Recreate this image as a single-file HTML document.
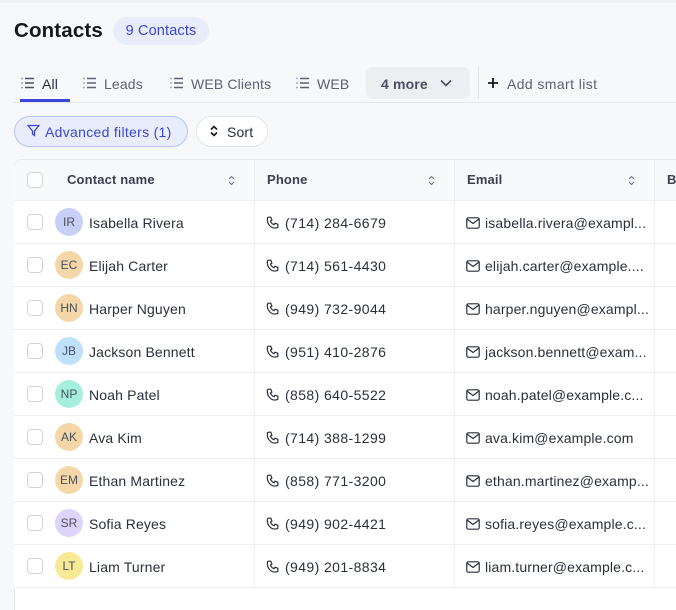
<!DOCTYPE html><html><head><style>
*{box-sizing:border-box;margin:0;padding:0}
html,body{width:676px;height:610px;overflow:hidden}
body{background:#f7f8fa;font-family:"Liberation Sans",sans-serif;color:#1f2330;position:relative;letter-spacing:0.15px}
.a{position:absolute}
.t{font-size:14px;color:#5b6272;white-space:nowrap}
.row{position:absolute;left:14px;width:662px;height:43px;border-bottom:1px solid #eceef2;background:#fff;overflow:hidden}
.cb{position:absolute;left:13px;top:13px;width:16px;height:16px;border:1px solid #cfd3db;border-radius:4px;background:#fff}
.av{position:absolute;left:41px;top:7px;width:28px;height:28px;border-radius:50%;font-size:12px;color:#4a5060;text-align:center;line-height:28px;letter-spacing:0}
.nm{position:absolute;left:75px;top:14px;font-size:14px;color:#2a2f3c}
.ph{position:absolute;top:14px;font-size:14px;color:#2a2f3c}
.em{position:absolute;top:14px;font-size:14px;color:#2a2f3c;white-space:nowrap}
</style></head><body>
<div class="a" style="left:0;top:0;width:676px;height:3px;background:#eef0f3"></div>
<div class="a" style="left:14px;top:19px;font-size:20.5px;font-weight:bold;color:#15171c">Contacts</div>
<div class="a" style="left:113px;top:17px;width:96px;height:28px;border-radius:14px;background:#e9edfb;color:#3b46d6;font-size:14.5px;text-align:center;line-height:29px">9 Contacts</div>

<svg class="a" style="left:21px;top:77px" width="14" height="12" viewBox="0 0 14 12" fill="none" stroke="#4a5060" stroke-width="1.4"><path d="M4 1.5h9M4 6h9M4 10.5h9M0.5 1.5h1M0.5 6h1M0.5 10.5h1"/></svg>
<div class="a t" style="left:42px;top:76px;color:#2a2f3c">All</div>
<div class="a" style="left:20px;top:99px;width:50px;height:3px;background:#3b46d6"></div>
<svg class="a" style="left:83px;top:77px" width="14" height="12" viewBox="0 0 14 12" fill="none" stroke="#5b6272" stroke-width="1.4"><path d="M4 1.5h9M4 6h9M4 10.5h9M0.5 1.5h1M0.5 6h1M0.5 10.5h1"/></svg>
<div class="a t" style="left:104px;top:76px">Leads</div>
<svg class="a" style="left:170px;top:77px" width="14" height="12" viewBox="0 0 14 12" fill="none" stroke="#5b6272" stroke-width="1.4"><path d="M4 1.5h9M4 6h9M4 10.5h9M0.5 1.5h1M0.5 6h1M0.5 10.5h1"/></svg>
<div class="a t" style="left:191px;top:76px">WEB Clients</div>
<svg class="a" style="left:296px;top:77px" width="14" height="12" viewBox="0 0 14 12" fill="none" stroke="#5b6272" stroke-width="1.4"><path d="M4 1.5h9M4 6h9M4 10.5h9M0.5 1.5h1M0.5 6h1M0.5 10.5h1"/></svg>
<div class="a t" style="left:317px;top:76px">WEB</div>
<div class="a" style="left:366px;top:67px;width:104px;height:32px;border-radius:7px;background:#eceef2"></div>
<div class="a t" style="left:381px;top:76px;font-weight:bold;color:#4a5060">4 more</div>
<svg class="a" style="left:440px;top:79px" width="12" height="8" viewBox="0 0 12 8" fill="none" stroke="#4a5060" stroke-width="1.6"><path d="M1 1.5l5 5 5-5"/></svg>
<div class="a" style="left:478px;top:67px;width:1px;height:32px;background:#e2e4e9"></div>
<svg class="a" style="left:487px;top:77px" width="12" height="12" viewBox="0 0 12 12" stroke="#15171c" stroke-width="1.8"><path d="M6 1v10M1 6h10"/></svg>
<div class="a t" style="left:507px;top:76px;letter-spacing:0.4px">Add smart list</div>
<div class="a" style="left:14px;top:102px;width:662px;height:1px;background:#e4e6ea"></div>

<div class="a" style="left:14px;top:116px;width:174px;height:31px;border-radius:16px;background:#e9edfb;border:1px solid #b9c3f5"></div>
<svg class="a" style="left:27px;top:124px" width="13" height="13" viewBox="0 0 13 13" fill="none" stroke="#3b46d6" stroke-width="1.3"><path d="M1 1.5h11L7.5 7v4.5L5.5 10V7z"/></svg>
<div class="a" style="left:45px;top:124px;font-size:14px;color:#3b46d6;letter-spacing:0.3px">Advanced filters (1)</div>
<div class="a" style="left:196px;top:116px;width:72px;height:31px;border-radius:16px;background:#fff;border:1px solid #e2e4e9"></div>
<svg class="a" style="left:210px;top:125px" width="8" height="12" viewBox="0 0 8 12" fill="none" stroke="#15171c" stroke-width="1.6"><path d="M1 4.5l3-3 3 3M1 7.5l3 3 3-3"/></svg>
<div class="a" style="left:227px;top:124px;font-size:14px;color:#2a2f3c">Sort</div>

<div class="a" style="left:14px;top:159px;width:662px;height:451px;background:#fff;border-top:1px solid #e6e8ec;border-left:1px solid #e6e8ec;border-radius:8px 0 0 0"></div>
<div class="row" style="top:160px;height:41px;background:#f8f9fb;border-radius:8px 0 0 0">
<div class="cb" style="top:12px"></div>
<div class="a" style="left:53px;top:12px;font-size:13px;font-weight:bold;color:#3a4050">Contact name</div>
<div class="a" style="left:253px;top:12px;font-size:13px;font-weight:bold;color:#3a4050">Phone</div>
<div class="a" style="left:453px;top:12px;font-size:13px;font-weight:bold;color:#3a4050">Email</div>
<div class="a" style="left:653px;top:12px;font-size:13px;font-weight:bold;color:#3a4050">B</div>
<svg class="a" style="left:214px;top:15px" width="7" height="11" viewBox="0 0 7 11" fill="none" stroke="#6b7280" stroke-width="1"><path d="M1 4l2.5-2.5L6 4M1 7l2.5 2.5L6 7"/></svg>
<svg class="a" style="left:414px;top:15px" width="7" height="11" viewBox="0 0 7 11" fill="none" stroke="#6b7280" stroke-width="1"><path d="M1 4l2.5-2.5L6 4M1 7l2.5 2.5L6 7"/></svg>
<svg class="a" style="left:614px;top:15px" width="7" height="11" viewBox="0 0 7 11" fill="none" stroke="#6b7280" stroke-width="1"><path d="M1 4l2.5-2.5L6 4M1 7l2.5 2.5L6 7"/></svg>
</div>
<div class="a" style="left:254px;top:160px;width:1px;height:428px;background:#eceef2;z-index:5"></div>
<div class="a" style="left:454px;top:160px;width:1px;height:428px;background:#eceef2;z-index:5"></div>
<div class="a" style="left:654px;top:160px;width:1px;height:428px;background:#eceef2;z-index:5"></div>
<div class="a" style="left:14px;top:200px;width:662px;height:1px;background:#eceef2;z-index:5"></div>

<div id="rows"></div>
<script>
var d=[["IR","Isabella Rivera","(714) 284-6679","isabella.rivera@exampl...","#c8d0f7"],
["EC","Elijah Carter","(714) 561-4430","elijah.carter@example....","#f3d7a8"],
["HN","Harper Nguyen","(949) 732-9044","harper.nguyen@exampl...","#f3d7a8"],
["JB","Jackson Bennett","(951) 410-2876","jackson.bennett@exam...","#bfe0fb"],
["NP","Noah Patel","(858) 640-5522","noah.patel@example.c...","#a5f0dc"],
["AK","Ava Kim","(714) 388-1299","ava.kim@example.com","#f3d7a8"],
["EM","Ethan Martinez","(858) 771-3200","ethan.martinez@examp...","#f3d7a8"],
["SR","Sofia Reyes","(949) 902-4421","sofia.reyes@example.c...","#ddd3fb"],
["LT","Liam Turner","(949) 201-8834","liam.turner@example.c...","#f8ea94"]];
var ph='<svg class="a" style="left:252px;top:15px" width="14" height="14" viewBox="0 0 14 14" fill="none" stroke="#2a2f3c" stroke-width="1.2"><path d="M2.5 1.2h2.3l1.1 2.9-1.5 1c.7 1.6 2 2.9 3.6 3.6l1-1.5 2.9 1.1v2.3c0 .6-.5 1.1-1.1 1.1C5.7 13.4.6 8.3 1.4 2.3c0-.6.5-1.1 1.1-1.1z"/></svg>';
var em='<svg class="a" style="left:452px;top:16px" width="14" height="12" viewBox="0 0 14 12" fill="none" stroke="#2a2f3c" stroke-width="1.2"><rect x="0.8" y="0.8" width="12.4" height="10.4" rx="1.5"/><path d="M1 2l6 4.5L13 2"/></svg>';
var h='';
d.forEach(function(r,i){h+='<div class="row" style="top:'+(201+i*43)+'px"><div class="cb"></div><div class="av" style="background:'+r[4]+'">'+r[0]+'</div><div class="nm">'+r[1]+'</div>'+ph+'<div class="ph" style="left:271px;letter-spacing:0.4px">'+r[2]+'</div>'+em+'<div class="em" style="left:471px">'+r[3]+'</div></div>';});
document.getElementById('rows').innerHTML=h;
</script>
</body></html>
